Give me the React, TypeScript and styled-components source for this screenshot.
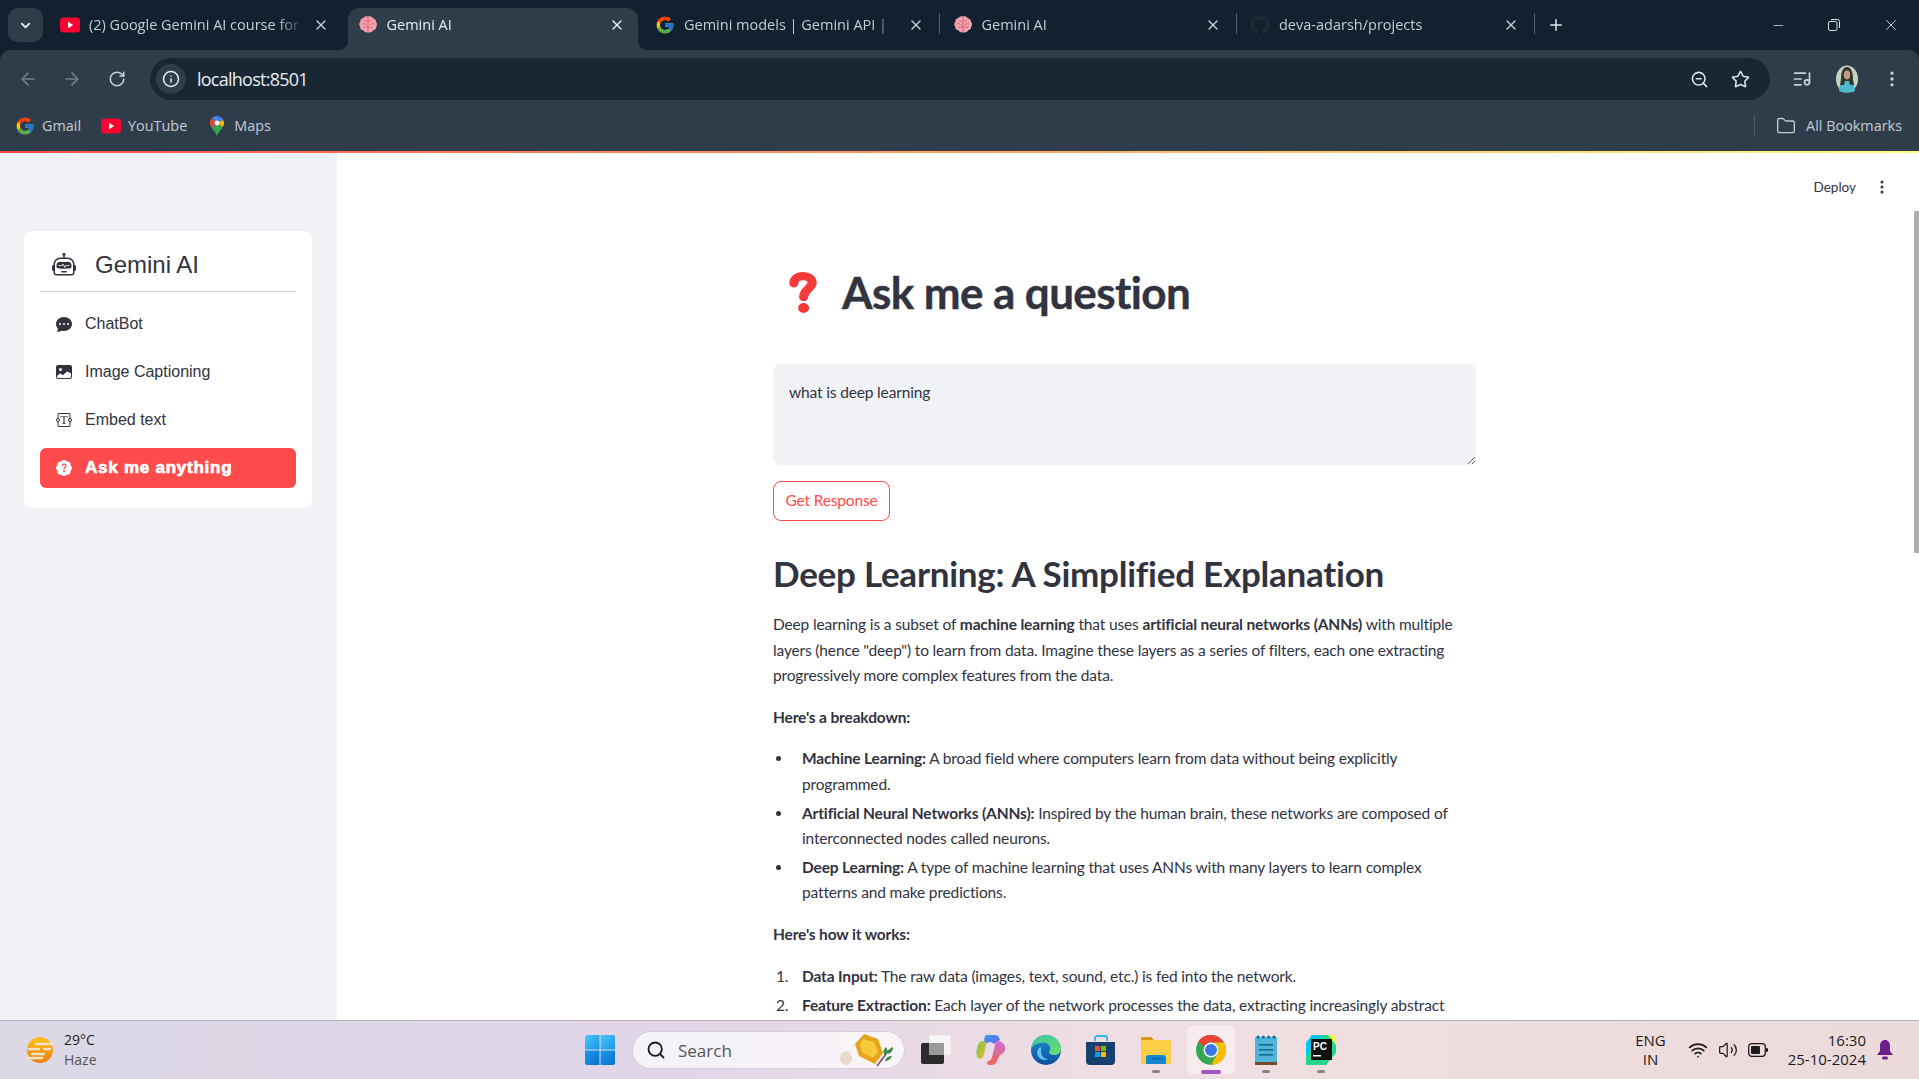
import React, { FC, ReactNode } from "react";
import styled, { createGlobalStyle } from "styled-components";
import {
  ArrowLeft,
  ArrowRight,
  ChevronDown,
  Folder,
  Info,
  ListMusic,
  Minus,
  MoreVertical,
  Plus,
  RotateCw,
  Search,
  Star,
  Volume2,
  Wifi,
  X,
  ZoomOut,
} from "lucide-react";
import {
  BsChatDotsFill,
  BsImageFill,
  BsPatchQuestionFill,
  BsRobot,
  BsTextareaT,
  BsThreeDotsVertical,
} from "react-icons/bs";
import { FaGithub } from "react-icons/fa";
import { FcGoogle } from "react-icons/fc";

const GlobalStyle = createGlobalStyle`
  html, body { margin: 0; padding: 0; height: 100%; overflow: hidden; }
  #root { height: 100%; }
  * { box-sizing: border-box; }
`;

const chromeFont = `"Open Sans", "Noto Sans", sans-serif`;
const bodyFont = `Lato, "Noto Sans", sans-serif`;

/* ---------- small drawings ---------- */

const YouTubeIcon: FC = () => (
  <svg width="20" height="20" viewBox="0 0 20 20">
    <rect x="0" y="2.5" width="20" height="15" rx="3.5" fill="#ff0033" />
    <path d="M8 6.8v6.4l5.2-3.2z" fill="#fff" />
  </svg>
);

const BrainIcon: FC = () => (
  <svg width="20" height="20" viewBox="0 0 20 20">
    <path
      d="M10 1.5c-2-.8-4 .1-4.6 1.6C3.4 3.3 2 5 2.4 6.8 1 8 .8 10.4 2.2 11.7c-.2 1.9 1.2 3.4 3 3.4.6 1.6 2.6 2.8 5 2.4 2.6.5 4.6-.6 5.2-2.4 1.9-.1 3-1.6 2.8-3.4 1.4-1.4 1.1-3.7-.3-4.9.3-1.8-1-3.4-3-3.6C14.200 1.800 12 .8 10 1.500z"
      fill="#f4a0ac"
    />
    <path
      d="M10 2v15M6 5c1 1 2 1 4 1M4 9c2-1 3 0 4 1M5 13c1-1 3-1 5-1M14 5c-1 1-2 1-4 1M16 9c-2-1-3 0-4 1M15 13c-1-1-3-1-5-1"
      stroke="#d9697c"
      strokeWidth="1"
      fill="none"
    />
  </svg>
);

const MapsIcon: FC = () => (
  <svg width="20" height="20" viewBox="-3 0 20 20">
    <path d="M7 20C5 15 0 11.500 0 7a7 7 0 0 1 2-5l5 5-3.500 4.500C5 14 6 17 7 20z" fill="#34a853" />
    <path d="M2 2A7 7 0 0 1 7 0c1.300 0 2.300.3 3.300.9L7 7z" fill="#4285f4" />
    <path d="M10.300.9A7 7 0 0 1 13.200 4L7 7z" fill="#4285f4" />
    <path d="M13.200 4A7 7 0 0 1 14 7c0 1.500-.6 2.900-1.300 4L7 7z" fill="#fbbc04" />
    <path d="M12.700 11C11 14 8 16.500 7 20c-1-3-2-6-3.500-8.500L7 7z" fill="#34a853" />
    <path d="M0 7a7 7 0 0 1 2-5l5 5-3.500 4.500C2 10.500 0 9 0 7z" fill="#ea4335" />
    <circle cx="7" cy="7" r="2.400" fill="#fff" />
  </svg>
);

const RestoreIcon: FC = () => (
  <svg width="14" height="14" viewBox="0 0 14 14" fill="none" stroke="#d8dee4" strokeWidth="1">
    <rect x="1.500" y="3.500" width="8.500" height="9" rx="1.500" />
    <path d="M4 1.500h6.500a2 2 0 0 1 2 2V10" />
  </svg>
);

const Avatar: FC = () => (
  <svg width="24" height="28" viewBox="0 0 24 28">
    <ellipse cx="12" cy="14" rx="11" ry="13.500" fill="#c8d2c4" />
    <path d="M4 26c0-7 3-11 8-11s8 4 8 11c-4 2-12 2-16 0z" fill="#4fb8cc" />
    <path d="M6 14C6 5 9 2 12 2s6 3 6 12l1 6h-4l-1-4h-4l-1 4H5z" fill="#2f382c" />
    <ellipse cx="12" cy="10" rx="3.200" ry="4.400" fill="#c79a7c" />
  </svg>
);

const QuestionMark: FC = () => (
  <svg width="28" height="41" viewBox="3 3.700 23 37.400" preserveAspectRatio="none">
    <path
      d="M7 14c0-4 3-6.500 7.500-6.500S22 10 22 13.500c0 5-7 6-7 13"
      fill="none"
      stroke="#f63b3b"
      strokeWidth="7.500"
      strokeLinecap="round"
    />
    <circle cx="15" cy="36.500" r="4.500" fill="#f63b3b" />
  </svg>
);

const WeatherIcon: FC = () => (
  <svg width="28" height="26" viewBox="0 0 28 26">
    <defs>
      <linearGradient id="sun" x1="0" y1="0" x2="0" y2="1">
        <stop offset="0" stopColor="#fcc419" />
        <stop offset="1" stopColor="#f07c0c" />
      </linearGradient>
    </defs>
    <circle cx="14" cy="13" r="13" fill="url(#sun)" />
    <g stroke="#eee4c8" strokeWidth="2.400" strokeLinecap="round">
      <path d="M10 7h17M3 12h10M18 12h6M6 17h12M0 21h16" />
    </g>
  </svg>
);

const WindowsLogo: FC = () => (
  <svg width="30" height="30" viewBox="0 0 30 30">
    <defs>
      <linearGradient id="winTop" x1="0" y1="0" x2="1" y2="1">
        <stop offset="0" stopColor="#4cc8f8" />
        <stop offset="1" stopColor="#1594e8" />
      </linearGradient>
      <linearGradient id="winBottom" x1="0" y1="0" x2="1" y2="1">
        <stop offset="0" stopColor="#1a9bea" />
        <stop offset="1" stopColor="#0a6fd0" />
      </linearGradient>
    </defs>
    <path d="M0 2a2 2 0 0 1 2-2h12.500v14.500H0z" fill="url(#winTop)" />
    <path d="M15.500 0H28a2 2 0 0 1 2 2v12.500H15.500z" fill="url(#winTop)" />
    <path d="M0 15.500h14.500V30H2a2 2 0 0 1-2-2z" fill="url(#winBottom)" />
    <path d="M15.500 15.500H30V28a2 2 0 0 1-2 2H15.500z" fill="url(#winBottom)" />
  </svg>
);

const SearchArt: FC = () => (
  <svg width="58" height="34" viewBox="0 0 58 34">
    <ellipse cx="7" cy="25" rx="6" ry="7" fill="#e6dccb" />
    <path d="M25 1l14 5 5 14-8 11-16-8-4-12z" fill="#e5a41c" />
    <path d="M24 6l11 3 4 10-5 6-11-6-2-8z" fill="#f7ca3c" />
    <path d="M38 33l12-16" stroke="#7a4a6a" strokeWidth="1.600" />
    <path d="M46 23c-3-4-1-7 1-9 2 3 2 6-1 9zM49 21c0-4 2-6 5-7 0 4-2 6-5 7zM46 28c1-4 4-5 7-5-1 3-4 5-7 5z" fill="#3e8e4a" />
  </svg>
);

const TaskViewIcon: FC = () => (
  <svg width="30" height="30" viewBox="0 0 30 30">
    <rect x="8" y="0" width="22" height="20" rx="2" fill="#f7f4f5" stroke="#ddd" strokeWidth=".5" />
    <rect x="0" y="8" width="23" height="21" rx="2" fill="#2b2b2b" />
    <rect x="8" y="8" width="15" height="12" fill="#9a9898" />
  </svg>
);

const CopilotIcon: FC = () => (
  <svg width="30" height="30" viewBox="0 0 30 30">
    <defs>
      <linearGradient id="copA" x1="0" y1="0" x2="1" y2="1">
        <stop offset="0" stopColor="#2aa5e8" />
        <stop offset="1" stopColor="#7c5cf0" />
      </linearGradient>
      <linearGradient id="copB" x1="0" y1="0" x2="1" y2="1">
        <stop offset="0" stopColor="#72c84a" />
        <stop offset="1" stopColor="#f7b733" />
      </linearGradient>
      <linearGradient id="copC" x1="0" y1="0" x2="0" y2="1">
        <stop offset="0" stopColor="#c86cdc" />
        <stop offset="1" stopColor="#f26a4f" />
      </linearGradient>
    </defs>
    <path d="M11 0h8c3 0 4 2 5 5l-6 4c-2-2-4-3-7-1L8 7c0-4 1-7 3-7z" fill="url(#copA)" />
    <path d="M7 6c2 0 4 1 3 4l-2 10c-1 3-3 4-5 4-3-2-3-7-2-11 1-4 3-7 6-7z" fill="url(#copB)" />
    <path d="M20 6c4 0 8 1 9 6 1 4-2 7-5 8l-3 6c-1 3-3 4-7 4-3 0-4-2-2-4 3 0 4-3 5-8z" fill="url(#copC)" />
  </svg>
);

const EdgeIcon: FC = () => (
  <svg width="30" height="30" viewBox="0 0 30 30">
    <defs>
      <linearGradient id="edgeA" x1="0" y1="0" x2="1" y2="1">
        <stop offset="0" stopColor="#36c6a4" />
        <stop offset="1" stopColor="#6fdc6c" />
      </linearGradient>
      <linearGradient id="edgeB" x1="0" y1="0" x2="0" y2="1">
        <stop offset="0" stopColor="#1e8cd8" />
        <stop offset="1" stopColor="#0f4f9c" />
      </linearGradient>
    </defs>
    <circle cx="15" cy="15" r="15" fill="url(#edgeB)" />
    <path d="M0 14C1 5 8 0 15 0c8 0 15 6 15 14 0 4-3 6-7 6-3 0-5-1-5-3 1-2 2-3 1-5-1-3-4-5-8-4C7 8 2 10 0 14z" fill="url(#edgeA)" />
    <path d="M10 16c0 5 3 8 7 8-3 2-8 1-10-3-2-4 0-8 3-9z" fill="#5fc4f0" />
  </svg>
);

const StoreIcon: FC = () => (
  <svg width="30" height="30" viewBox="0 0 30 30">
    <path d="M9 6V3a2 2 0 0 1 2-2h8a2 2 0 0 1 2 2v3" fill="none" stroke="#29b6e8" strokeWidth="1.800" />
    <path d="M0 7h29v19a4 4 0 0 1-4 4H4a4 4 0 0 1-4-4z" fill="#16406e" />
    <rect x="9" y="11" width="5" height="5" fill="#f25022" />
    <rect x="15" y="11" width="5" height="5" fill="#7fba00" />
    <rect x="9" y="17" width="5" height="5" fill="#00a4ef" />
    <rect x="15" y="17" width="5" height="5" fill="#ffb900" />
  </svg>
);

const ExplorerIcon: FC = () => (
  <svg width="30" height="30" viewBox="0 0 30 30">
    <path d="M0 4a2 2 0 0 1 2-2h8l3 3h-13z" fill="#d9980f" />
    <path d="M0 5h30v23a1 1 0 0 1-1 1H1a1 1 0 0 1-1-1z" fill="#fbcf45" />
    <path d="M5 29v-6a3 3 0 0 1 3-3h14a3 3 0 0 1 3 3v6z" fill="#1487d4" />
    <rect x="11" y="23" width="9" height="1.500" fill="#0d5d9e" />
  </svg>
);

const ChromeIcon: FC = () => (
  <svg width="30" height="30" viewBox="0 0 30 30">
    <circle cx="15" cy="15" r="15" fill="#34a853" />
    <path d="M15 0a15 15 0 0 1 13 7.500H15a7.500 7.500 0 0 0-6.500 3.750L2 7A15 15 0 0 1 15 0z" fill="#ea4335" />
    <path d="M28 7.500A15 15 0 0 1 15 30l6.500-11.250A7.500 7.500 0 0 0 15 7.500z" fill="#fbbc04" />
    <circle cx="15" cy="15" r="7.500" fill="#fff" />
    <circle cx="15" cy="15" r="6" fill="#3b78e7" />
  </svg>
);

const NotepadIcon: FC = () => (
  <svg width="22" height="30" viewBox="0 0 22 30">
    <rect x="0" y="2" width="22" height="26" rx="1" fill="#4fb4d8" />
    <rect x="0" y="27" width="22" height="3" fill="#7a4a28" />
    <g fill="#136a8e">
      <circle cx="3" cy="2" r="1.500" />
      <circle cx="8.300" cy="2" r="1.500" />
      <circle cx="13.700" cy="2" r="1.500" />
      <circle cx="19" cy="2" r="1.500" />
      <rect x="4" y="9" width="14" height="1.600" />
      <rect x="4" y="14" width="14" height="1.600" />
      <rect x="4" y="19" width="14" height="1.600" />
    </g>
  </svg>
);

const PyCharmIcon: FC = () => (
  <svg width="30" height="30" viewBox="0 0 30 30">
    <path d="M6 0h24v18L20 30H0V8z" fill="#21d789" />
    <path d="M0 8l6-8h10L0 22z" fill="#07c3f2" />
    <path d="M30 0v10L22 0z" fill="#fcf84a" />
    <rect x="5" y="4" width="21" height="21" fill="#111" />
    <text x="7" y="15" fill="#fff" fontFamily="Liberation Sans, sans-serif" fontWeight="700" fontSize="10">
      PC
    </text>
    <rect x="7" y="20" width="8" height="1.500" fill="#fff" />
  </svg>
);

const BatteryIcon: FC = () => (
  <svg width="20" height="14" viewBox="0 0 20 14">
    <rect x=".7" y=".7" width="16.600" height="12.600" rx="3" fill="none" stroke="#1c1c1c" strokeWidth="1.300" />
    <rect x="3" y="3" width="9" height="8" rx="1" fill="#1c1c1c" />
    <rect x="18" y="5" width="2" height="4" rx="1" fill="#1c1c1c" />
  </svg>
);

const BellIcon: FC = () => (
  <svg width="16" height="20" viewBox="0 0 16 20">
    <path d="M8 0c-3 0-5 2.500-5 6v5l-3 4h16l-3-4V6c0-3.500-2-6-5-6z" fill="#6a1f8c" />
    <rect x="5" y="16.500" width="6" height="3" rx="1.500" fill="#6a1f8c" />
  </svg>
);

/* ---------- browser chrome ---------- */

const Page = styled.div`
  display: flex;
  flex-direction: column;
  height: 100vh;
  width: 100%;
  overflow: hidden;
  position: relative;
  background: #fff;
  color: #31333f;
`;

const TabStrip = styled.div`
  height: 50px;
  flex: none;
  background: #122130;
  display: flex;
  align-items: flex-end;
  padding-left: 8px;
  font-family: ${chromeFont};
  position: relative;
`;

const TabSearch = styled.div`
  width: 35px;
  height: 34px;
  margin-bottom: 8px;
  margin-right: 7px;
  border-radius: 10px;
  background: #2f3d4b;
  color: #e8edf1;
  display: flex;
  align-items: center;
  justify-content: center;
`;

const TabItem = styled.div<{ $active?: boolean; $divider?: boolean }>`
  width: 297.5px;
  height: 42px;
  flex: none;
  display: flex;
  align-items: center;
  gap: 9px;
  padding: 0 19px 9px 10px;
  position: relative;
  font-size: 14.500px;
  color: ${(p) => (p.$active ? "#e8edf1" : "#c4ccd4")};
  background: ${(p) => (p.$active ? "#2f3d4b" : "transparent")};
  border-radius: 11px 11px 0 0;
  ${(p) =>
    p.$active &&
    `
    width: 290px;
    margin-right: 7.500px;
    padding-right: 13px;
    &::before, &::after {
      content: "";
      position: absolute;
      bottom: 0;
      width: 10px;
      height: 10px;
    }
    &::before { left: -10px; background: radial-gradient(circle at 0 0, transparent 10px, #2f3d4b 10.500px); }
    &::after { right: -10px; background: radial-gradient(circle at 100% 0, transparent 10px, #2f3d4b 10.500px); }
  `}
  ${(p) =>
    p.$divider &&
    `
    &::after {
      content: "";
      position: absolute;
      right: 3px;
      top: 5px;
      height: 21px;
      width: 1px;
      background: #53606c;
    }
  `}
`;

const TabIcon = styled.span`
  width: 20px;
  height: 20px;
  flex: none;
  display: flex;
  align-items: center;
  justify-content: center;
`;

const TabTitle = styled.span`
  flex: 1;
  min-width: 0;
  white-space: nowrap;
  overflow: hidden;
  mask-image: linear-gradient(90deg, #000 88%, transparent);
`;

const NewTab = styled.div`
  color: #e0e6eb;
  margin-left: 9px;
  height: 42px;
  display: flex;
  align-items: center;
  padding-bottom: 9px;
`;

const WindowControls = styled.div`
  margin-left: auto;
  display: flex;
  align-items: center;
  height: 50px;
  color: #d8dee4;
  padding-right: 19px;
  gap: 41px;
`;

const Toolbar = styled.div`
  height: 50px;
  flex: none;
  background: #2f3d4b;
  border-radius: 10px 10px 0 0;
  display: flex;
  align-items: flex-end;
  padding-left: 18px;
  color: #75808c;
  box-shadow: 0 -10px 0 0 #122130;
  font-family: ${chromeFont};
`;

const NavRow = styled.div`
  display: flex;
  gap: 24px;
  height: 42px;
  align-items: center;
  margin-right: 24px;
`;

const ReloadIcon = styled(RotateCw)`
  margin-left: 2px;
  color: #c8d0d8;
`;

const Omnibox = styled.div`
  width: 1620px;
  height: 42px;
  background: #192735;
  border-radius: 21px;
  display: flex;
  align-items: center;
  padding: 0 20px 0 6px;
  color: #e8edf1;
  font-size: 18px;
`;

const InfoChip = styled.span`
  width: 30px;
  height: 30px;
  border-radius: 50%;
  background: #2f3d4b;
  display: flex;
  align-items: center;
  justify-content: center;
  margin-right: 11px;
`;

const Url = styled.span`
  flex: 1;
  letter-spacing: -0.75px;
`;

const OmniActions = styled.div`
  display: flex;
  gap: 22px;
  align-items: center;
  color: #dde3e8;
`;

const ToolbarActions = styled.div`
  display: flex;
  height: 42px;
  align-items: center;
  margin-left: 22px;
  gap: 23px;
  color: #c8d0d8;
`;

const Bookmarks = styled.div`
  height: 51px;
  flex: none;
  background: #2f3d4b;
  display: flex;
  align-items: center;
  padding: 0 17px 0 15px;
  font-family: ${chromeFont};
  font-size: 14.400px;
  color: #c4ccd4;
`;

const Bookmark = styled.div`
  display: flex;
  align-items: center;
  gap: 7px;
  margin-right: 20px;
`;

const AllBookmarks = styled.div`
  margin-left: auto;
  display: flex;
  align-items: center;
  gap: 10px;
  height: 21px;
  padding-left: 21px;
  border-left: 1px solid #4c5a67;
`;

const Decoration = styled.div`
  height: 2px;
  flex: none;
  background: linear-gradient(90deg, #ff4b4b, #fffd80);
`;

/* ---------- streamlit page ---------- */

const Content = styled.div`
  flex: 1;
  min-height: 0;
  display: flex;
  overflow: hidden;
  position: relative;
`;

const Sidebar = styled.aside`
  width: 337px;
  flex: none;
  background: #f0f2f6;
  padding: 78px 25px 0 24px;
`;

const MenuCard = styled.div`
  background: #fff;
  border-radius: 8px;
  padding: 8px 16px 20px;
  font-family: "Liberation Sans", Arial, sans-serif;
`;

const Brand = styled.div`
  display: flex;
  align-items: center;
  gap: 19px;
  height: 53px;
  padding-left: 12px;
  font-size: 24px;
  color: #31333f;
  border-bottom: 1px solid #cdcdd0;
`;

const MenuList = styled.div`
  display: flex;
  flex-direction: column;
  gap: 8px;
  margin-top: 12px;
`;

const MenuItem = styled.div<{ $active?: boolean }>`
  height: 40px;
  border-radius: 6px;
  display: flex;
  align-items: center;
  gap: 13px;
  padding-left: 16px;
  font-size: ${(p) => (p.$active ? "17px" : "16px")};
  font-weight: ${(p) => (p.$active ? 700 : 400)};
  letter-spacing: ${(p) => (p.$active ? "0.75px" : "0")};
  -webkit-text-stroke: ${(p) => (p.$active ? "0.7px #fff" : "0")};
  color: ${(p) => (p.$active ? "#fff" : "#31333f")};
  background: ${(p) => (p.$active ? "#ff4b4b" : "transparent")};
`;

const Main = styled.main`
  flex: 1;
  min-width: 0;
  padding: 109px 0 0 436px;
  font-family: ${bodyFont};
  font-size: 15.500px;
  letter-spacing: -0.15px;
  line-height: 25.6px;
`;

const Column = styled.div`
  width: 703px;
`;

const Header = styled.div`
  position: absolute;
  top: 26px;
  right: 29px;
  display: flex;
  align-items: center;
  gap: 18px;
  font-size: 13.500px;
  color: #31333f;
  font-family: ${bodyFont};
`;

const ScrollThumb = styled.div`
  position: absolute;
  right: 0;
  top: 58px;
  width: 5px;
  height: 342px;
  background: #aeaeb2;
`;

const Title = styled.h1`
  margin: 0 0 42px 16px;
  display: flex;
  align-items: center;
  gap: 25px;
  height: 60px;
  font-size: 44px;
  font-weight: 700;
  letter-spacing: -0.6px;
  line-height: 60px;
  -webkit-text-stroke: 0.4px #31333f;
`;

const Prompt = styled.textarea`
  display: block;
  width: 100%;
  height: 101px;
  border: none;
  outline: none;
  border-radius: 8px;
  background: #f0f2f6;
  color: #31333f;
  padding: 16px;
  font: inherit;
  letter-spacing: inherit;
  resize: vertical;
`;

const ResponseButton = styled.button`
  display: block;
  margin-top: 16px;
  width: 117px;
  height: 40px;
  background: #fff;
  border: 1px solid #ff4b4b;
  border-radius: 8px;
  color: #ff4b4b;
  font: inherit;
  letter-spacing: inherit;
  padding: 0;
`;

const Heading = styled.h2`
  margin: 25px 0 12px;
  font-size: 35px;
  font-weight: 700;
  line-height: 54px;
  letter-spacing: -0.25px;
`;

const Para = styled.p`
  margin: 0 0 16px;
`;

const List = styled.ul`
  margin: 0 0 16px;
  padding-left: 29px;
  list-style: none;
  li {
    margin-bottom: 3px;
    position: relative;
  }
  li::before {
    content: "";
    position: absolute;
    left: -26px;
    top: 10px;
    width: 5px;
    height: 5px;
    border-radius: 50%;
    background: #31333f;
  }
`;

const Ordered = styled.ol`
  margin: 0;
  padding-left: 29px;
  list-style: none;
  counter-reset: step;
  li {
    margin-bottom: 4px;
    position: relative;
    counter-increment: step;
  }
  li::before {
    content: counter(step) ".";
    position: absolute;
    left: -26px;
  }
`;

/* ---------- taskbar ---------- */

const Taskbar = styled.footer`
  height: 59px;
  flex: none;
  border-top: 1px solid #bbb3ba;
  background: linear-gradient(90deg, #dcd8e6 0%, #e0d6e8 35%, #f0dee2 60%, #ecdadb 100%);
  display: flex;
  align-items: center;
  padding-left: 26px;
  font-family: ${chromeFont};
  color: #1c1c1c;
  position: relative;
`;

const Weather = styled.div`
  display: flex;
  align-items: center;
  gap: 10px;
  width: 559px;
  font-size: 14px;
  line-height: 20px;
`;

const WeatherText = styled.div`
  display: flex;
  flex-direction: column;
  span + span { color: #555; }
`;

const SearchPill = styled.div`
  width: 273px;
  height: 38px;
  margin-left: 17px;
  margin-right: 3px;
  border-radius: 19px;
  background: rgba(255, 255, 255, 0.7);
  border: 1px solid #d8ced8;
  display: flex;
  align-items: center;
  gap: 12px;
  padding: 0 7px 0 13px;
  font-size: 17px;
  color: #555;
`;

const SearchLabel = styled.span`
  flex: 1;
`;

const Slot = styled.div<{ $active?: boolean }>`
  width: 55px;
  height: 48px;
  position: relative;
  display: flex;
  align-items: center;
  justify-content: center;
  padding-bottom: 1px;
  &::before {
    ${(p) => (p.$active ? `content: "";` : "")}
    position: absolute;
    left: 3.500px;
    width: 48px;
    top: 0;
    bottom: 0;
    border-radius: 5px;
    background: rgba(255, 255, 255, 0.45);
  }
  svg { position: relative; }
`;

const Indicator = styled.span<{ $active?: boolean }>`
  position: absolute;
  bottom: ${(p) => (p.$active ? "0" : "1px")};
  left: 50%;
  transform: translateX(-50%);
  width: ${(p) => (p.$active ? "20px" : "8px")};
  height: ${(p) => (p.$active ? "4px" : "3px")};
  border-radius: 2px;
  background: ${(p) => (p.$active ? "#ab52c4" : "#8a8486")};
`;

const Tray = styled.div`
  margin-left: auto;
  display: flex;
  align-items: center;
  padding-right: 26px;
  font-size: 15px;
  line-height: 19px;
`;

const Lang = styled.div`
  text-align: center;
  margin-right: 22px;
  display: flex;
  flex-direction: column;
`;

const TrayIcons = styled.div`
  display: flex;
  align-items: center;
  gap: 10px;
  margin-right: 20px;
`;

const Clock = styled.div`
  text-align: right;
  margin-right: 11px;
  display: flex;
  flex-direction: column;
`;

const tabs: { icon: ReactNode; title: string; active?: boolean; divider?: boolean }[] = [
  { icon: <YouTubeIcon />, title: "(2) Google Gemini AI course for beginners" },
  { icon: <BrainIcon />, title: "Gemini AI", active: true },
  { icon: <FcGoogle size={20} />, title: "Gemini models  |  Gemini API  |", divider: true },
  { icon: <BrainIcon />, title: "Gemini AI", divider: true },
  { icon: <FaGithub size={20} color="#1e2a36" />, title: "deva-adarsh/projects", divider: true },
];

const dockApps: { icon: ReactNode; dot?: boolean; active?: boolean }[] = [
  { icon: <TaskViewIcon /> },
  { icon: <CopilotIcon /> },
  { icon: <EdgeIcon /> },
  { icon: <StoreIcon /> },
  { icon: <ExplorerIcon />, dot: true },
  { icon: <ChromeIcon />, dot: true, active: true },
  { icon: <NotepadIcon />, dot: true },
  { icon: <PyCharmIcon />, dot: true },
];

const App: FC = () => {
  return (
    <Page>
      <GlobalStyle />
      <TabStrip>
        <TabSearch>
          <ChevronDown size={15} strokeWidth={3} />
        </TabSearch>
        {tabs.map((tab, i) => (
          <TabItem key={i} $active={tab.active} $divider={tab.divider}>
            <TabIcon>{tab.icon}</TabIcon>
            <TabTitle>{tab.title}</TabTitle>
            <X size={16} strokeWidth={2} />
          </TabItem>
        ))}
        <NewTab>
          <Plus size={18} />
        </NewTab>
        <WindowControls>
          <Minus size={15} strokeWidth={1.2} />
          <RestoreIcon />
          <X size={18} strokeWidth={1.2} />
        </WindowControls>
      </TabStrip>
      <Toolbar>
        <NavRow>
          <ArrowLeft size={20} />
          <ArrowRight size={20} />
          <ReloadIcon size={18} />
        </NavRow>
        <Omnibox>
          <InfoChip>
            <Info size={18} />
          </InfoChip>
          <Url>localhost:8501</Url>
          <OmniActions>
            <ZoomOut size={19} />
            <Star size={19} />
          </OmniActions>
        </Omnibox>
        <ToolbarActions>
          <ListMusic size={20} />
          <Avatar />
          <MoreVertical size={20} />
        </ToolbarActions>
      </Toolbar>
      <Bookmarks>
        <Bookmark>
          <FcGoogle size={20} />
          Gmail
        </Bookmark>
        <Bookmark>
          <YouTubeIcon />
          YouTube
        </Bookmark>
        <Bookmark>
          <MapsIcon />
          Maps
        </Bookmark>
        <AllBookmarks>
          <Folder size={20} strokeWidth={1.6} />
          All Bookmarks
        </AllBookmarks>
      </Bookmarks>
      <Decoration />
      <Content>
        <Sidebar>
          <MenuCard>
            <Brand>
              <BsRobot size={24} />
              Gemini AI
            </Brand>
            <MenuList>
              <MenuItem>
                <BsChatDotsFill size={16} />
                ChatBot
              </MenuItem>
              <MenuItem>
                <BsImageFill size={16} />
                Image Captioning
              </MenuItem>
              <MenuItem>
                <BsTextareaT size={16} />
                Embed text
              </MenuItem>
              <MenuItem $active>
                <BsPatchQuestionFill size={16} />
                Ask me anything
              </MenuItem>
            </MenuList>
          </MenuCard>
        </Sidebar>
        <Main>
          <Column>
            <Title>
              <QuestionMark />
              Ask me a question
            </Title>
            <Prompt readOnly defaultValue="what is deep learning" />
            <ResponseButton>Get Response</ResponseButton>
            <Heading>Deep Learning: A Simplified Explanation</Heading>
            <Para>
              Deep learning is a subset of <b>machine learning</b> that uses{" "}
              <b>artificial neural networks (ANNs)</b> with multiple layers (hence "deep") to learn
              from data. Imagine these layers as a series of filters, each one extracting
              progressively more complex features from the data.
            </Para>
            <Para>
              <b>Here's a breakdown:</b>
            </Para>
            <List>
              <li>
                <b>Machine Learning:</b> A broad field where computers learn from data without being
                explicitly programmed.
              </li>
              <li>
                <b>Artificial Neural Networks (ANNs):</b> Inspired by the human brain, these networks
                are composed of interconnected nodes called neurons.
              </li>
              <li>
                <b>Deep Learning:</b> A type of machine learning that uses ANNs with many layers to
                learn complex patterns and make predictions.
              </li>
            </List>
            <Para>
              <b>Here's how it works:</b>
            </Para>
            <Ordered>
              <li>
                <b>Data Input:</b> The raw data (images, text, sound, etc.) is fed into the network.
              </li>
              <li>
                <b>Feature Extraction:</b> Each layer of the network processes the data, extracting
                increasingly abstract features.
              </li>
            </Ordered>
          </Column>
        </Main>
        <Header>
          Deploy
          <BsThreeDotsVertical size={16} />
        </Header>
        <ScrollThumb />
      </Content>
      <Taskbar>
        <Weather>
          <WeatherIcon />
          <WeatherText>
            <span>29°C</span>
            <span>Haze</span>
          </WeatherText>
        </Weather>
        <WindowsLogo />
        <SearchPill>
          <Search size={20} color="#1c1c1c" strokeWidth={2.2} />
          <SearchLabel>Search</SearchLabel>
          <SearchArt />
        </SearchPill>
        {dockApps.map((app, i) => (
          <Slot key={i} $active={app.active}>
            {app.icon}
            {app.dot && <Indicator $active={app.active} />}
          </Slot>
        ))}
        <Tray>
          <Lang>
            <span>ENG</span>
            <span>IN</span>
          </Lang>
          <TrayIcons>
            <Wifi size={20} />
            <Volume2 size={20} strokeWidth={1.5} />
            <BatteryIcon />
          </TrayIcons>
          <Clock>
            <span>16:30</span>
            <span>25-10-2024</span>
          </Clock>
          <BellIcon />
        </Tray>
      </Taskbar>
    </Page>
  );
};

export default App;
